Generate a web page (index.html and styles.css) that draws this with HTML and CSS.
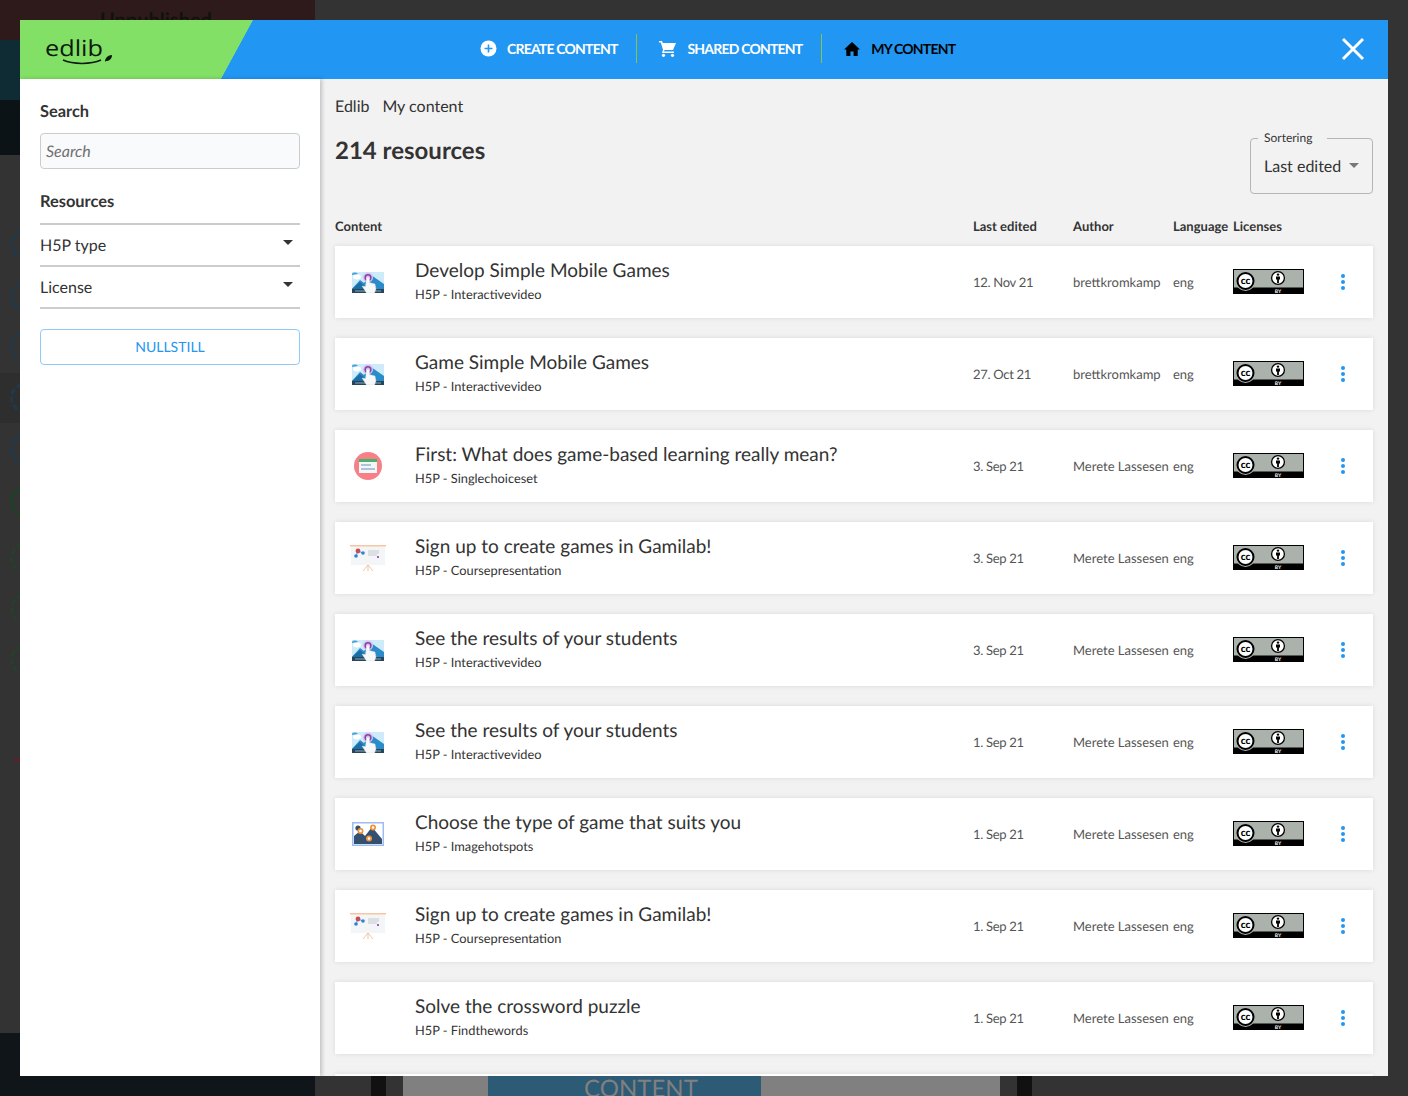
FILE: index.html
```html
<!DOCTYPE html>
<html lang="en">
<head>
    <meta charset="UTF-8">
    <meta name="viewport" content="width=device-width, initial-scale=1.0">
    <title>Edlib - My content</title>
    <link rel="stylesheet" href="styles.css">
</head>
<body>

    <svg width="0" height="0" class="defs">
        <defs>
            <symbol id="thumb-video" viewBox="0 0 32 21">
                <rect width="32" height="21" fill="#cdebf8"/>
                <path d="M0 17 L8 8 L12 11 L19 3 L32 12 V17Z" fill="#2a8ccb"/>
                <path d="M0 17 L8 10 L16 17Z" fill="#1b6fa8"/>
                <ellipse cx="5" cy="5" rx="4" ry="2.400" fill="#fff"/>
                <path d="M0 3 a3 2 0 0 1 6 -1" fill="#4aa3dc"/>
                <rect y="17" width="32" height="4" fill="#27465c"/>
                <rect x="3" y="18.500" width="26" height="1" fill="#8fa6b5"/>
                <circle cx="16" cy="5.500" r="5" fill="#d5c3ea"/>
                <circle cx="16" cy="5.500" r="2.800" fill="none" stroke="#8a3fb0" stroke-width="1.600"/>
                <path d="M14.500 5.500 h3 v5 l5.500 1.500 1 5 -1.500 4 h-8 l-4.500 -7 3.500 0.500Z" fill="#f6f8fa" stroke="#d3dade" stroke-width=".4"/>
            </symbol>
            <symbol id="thumb-choice" viewBox="0 0 28 28">
                <circle cx="14" cy="14" r="14" fill="#f77f88"/>
                <rect x="5" y="7" width="18" height="14" fill="#f4f6f8"/>
                <rect x="5" y="7" width="18" height="3" fill="#45b36b"/>
                <rect x="7" y="12" width="10" height="2" fill="#a9c4dc"/>
                <rect x="7" y="16" width="14" height="2" fill="#a9c4dc"/>
            </symbol>
            <symbol id="thumb-slides" viewBox="0 0 36 28">
                <rect x="1" y="2" width="34" height="19" fill="#f4f5f7"/>
                <rect y="1" width="36" height="1.500" fill="#f6c7a4"/>
                <circle cx="8" cy="7" r="2.400" fill="#e8413c"/>
                <circle cx="6" cy="12" r="1.800" fill="#2f80d8"/>
                <circle cx="13" cy="9" r="1.800" fill="#2f80d8"/>
                <path d="M8 7 L6 12 M8 7 L13 9" stroke="#2f80d8" stroke-width=".8"/>
                <path d="M18 7 H29 M18 9 H29 M18 11 H27" stroke="#c5c9d0" stroke-width="1"/>
                <rect x="27" y="12" width="2" height="2" fill="#a55bc8"/>
                <path d="M18 21 L13 27 M18 21 L23 27 M18 21 V27" stroke="#f3b48a" stroke-width=".8"/>
            </symbol>
            <symbol id="thumb-hotspot" viewBox="0 0 32 24">
                <rect x=".75" y=".75" width="30.500" height="22.500" fill="#fff" stroke="#9cbcf2" stroke-width="1.500"/>
                <path d="M2 22 V14 L8 9 L13 14 L20 5 L30 17 V22Z" fill="#34506e"/>
                <circle cx="6" cy="6" r="2.600" fill="#34506e"/>
                <circle cx="8.500" cy="9" r="3" fill="#f0923c"/>
                <circle cx="21" cy="5.500" r="3" fill="#f0923c"/>
                <circle cx="17" cy="16.500" r="3" fill="#f0923c"/>
                <circle cx="8.500" cy="9" r="1.300" fill="#fff"/>
                <circle cx="21" cy="5.500" r="1.300" fill="#fff"/>
                <circle cx="17" cy="16.500" r="1.300" fill="#fff"/>
            </symbol>
            <symbol id="cc-by" viewBox="0 0 71 25">
                <rect width="71" height="25" fill="#000"/>
                <rect x="1" y="1" width="69" height="17.500" fill="#aab2ab"/>
                <circle cx="12.500" cy="12" r="10" fill="#aab2ab"/>
                <circle cx="12.500" cy="12" r="8" fill="#fff" stroke="#000" stroke-width="2"/>
                <text x="12.500" y="15" class="cc-mark">cc</text>
                <circle cx="45" cy="9" r="6.400" fill="#fff" stroke="#000" stroke-width="1.300"/>
                <circle cx="45" cy="5.600" r="1.200" fill="#000"/>
                <path d="M43 7.400h4v3.200h-1.100v3.400h-1.800v-3.400H43Z" fill="#000"/>
                <text x="45" y="23.700" class="by-mark">BY</text>
            </symbol>
        </defs>
    </svg>

    <!-- Siden bak modalen -->
    <div class="backdrop">
        <div class="back-hero">
            <div class="back-label">Unpublished</div>
        </div>
        <div class="back-band"></div>
        <div class="back-rings">
            <span class="ring"></span>
            <span class="ring"></span>
            <span class="ring"></span>
            <span class="ring"></span>
            <span class="ring"></span>
            <span class="ring ring-solid"></span>
            <span class="ring ring-green"></span>
            <span class="ring ring-green"></span>
            <span class="ring ring-green"></span>
        </div>
        <div class="back-tick"></div>
        <div class="back-footer">
            <div class="back-footer-left"></div>
            <div class="back-gap"></div>
            <div class="back-strip"></div>
            <div class="back-gap small"></div>
            <div class="back-tabs">
                <div class="back-tab"></div>
                <div class="back-tab active">CONTENT</div>
                <div class="back-tab wide"></div>
            </div>
            <div class="back-gap small"></div>
            <div class="back-strip"></div>
        </div>
    </div>

    <div class="modal">
        <header class="topbar">
            <div class="brand">
                <div class="brand-name">edlib</div>
                <svg class="brand-leaf" width="8" height="9" viewBox="0 0 8 9"><path d="M1 8 C1 4 4 1 8 1 C8 5 5 7 2 7Z" fill="#0b1a0b"/></svg>
                <svg class="brand-smile" width="40" height="6" viewBox="0 0 40 6"><path d="M1 1 C11 5.500 29 5.500 39 1" fill="none" stroke="#0b1a0b" stroke-width="1.500"/></svg>
            </div>
            <nav class="nav">
                <a class="nav-item">
                    <svg width="17" height="17" viewBox="0 0 17 17"><circle cx="8.500" cy="8.500" r="8" fill="#fff"/><path d="M8.500 4.500v8M4.500 8.500h8" stroke="#2196f3" stroke-width="1.600"/></svg>
                    CREATE CONTENT
                </a>
                <a class="nav-item">
                    <svg width="18" height="17" viewBox="0 0 18 17"><path d="M0 1h3l.8 2H17l-3 7H5.500L5 11.500h10v1.600H3L4 9.800 1.800 2.600H0Z" fill="#fff"/><circle cx="4.500" cy="15.300" r="1.600" fill="#fff"/><circle cx="13.500" cy="15.300" r="1.600" fill="#fff"/></svg>
                    SHARED CONTENT
                </a>
                <a class="nav-item current">
                    <svg width="16" height="14" viewBox="0 0 16 14"><path d="M8 0 16 7.400h-2.300V14H9.600V9.400H6.400V14H2.300V7.400H0Z" fill="#000"/></svg>
                    MY CONTENT
                </a>
            </nav>
            <svg class="close" width="24" height="24" viewBox="0 0 24 24"><path d="M2 2 22 22M22 2 2 22" stroke="#fff" stroke-width="3"/></svg>
        </header>

        <div class="body">
            <aside class="sidebar">
                <h3>Search</h3>
                <input type="text" class="search-input" placeholder="Search">
                <h3 class="resources-title">Resources</h3>
                <div class="filter">H5P type<span class="caret"></span></div>
                <div class="filter">License<span class="caret"></span></div>
                <button class="reset-button">NULLSTILL</button>
            </aside>

            <main class="content">
                <div class="crumbs"><span>Edlib</span><span>My content</span></div>
                <div class="title-row">
                    <h1>214 resources</h1>
                    <fieldset class="sort">
                        <legend>Sortering</legend>
                        <span>Last edited</span><span class="caret gray"></span>
                    </fieldset>
                </div>

                <div class="table-head">
                    <div>Content</div>
                    <div>Last edited</div>
                    <div>Author</div>
                    <div>Language</div>
                    <div>Licenses</div>
                </div>

                <div class="rows" id="rows"></div>
            </main>
        </div>
    </div>

    <script>
        var resources = [
            ["video", "Develop Simple Mobile Games", "Interactivevideo", "12. Nov 21", "brettkromkamp"],
            ["video", "Game Simple Mobile Games", "Interactivevideo", "27. Oct 21", "brettkromkamp"],
            ["choice", "First: What does game-based learning really mean?", "Singlechoiceset", "3. Sep 21", "Merete Lassesen"],
            ["slides", "Sign up to create games in Gamilab!", "Coursepresentation", "3. Sep 21", "Merete Lassesen"],
            ["video", "See the results of your students", "Interactivevideo", "3. Sep 21", "Merete Lassesen"],
            ["video", "See the results of your students", "Interactivevideo", "1. Sep 21", "Merete Lassesen"],
            ["hotspot", "Choose the type of game that suits you", "Imagehotspots", "1. Sep 21", "Merete Lassesen"],
            ["slides", "Sign up to create games in Gamilab!", "Coursepresentation", "1. Sep 21", "Merete Lassesen"],
            ["", "Solve the crossword puzzle", "Findthewords", "1. Sep 21", "Merete Lassesen"]
        ];

        var html = "";
        resources.forEach(function (r) {
            var thumb = r[0] ? '<svg class="thumb-' + r[0] + '"><use href="#thumb-' + r[0] + '"/></svg>' : "";
            html += '<div class="row">' +
                '<div class="thumb">' + thumb + '</div>' +
                '<div class="row-main"><div class="row-title">' + r[1] + '</div><div class="row-type">H5P - ' + r[2] + '</div></div>' +
                '<div class="cell date">' + r[3] + '</div>' +
                '<div class="cell">' + r[4] + '</div>' +
                '<div class="cell">eng</div>' +
                '<div class="license"><svg width="71" height="25"><use href="#cc-by"/></svg></div>' +
                '<div class="dots"><i></i><i></i><i></i></div>' +
                '</div>';
        });
        html += '<div class="row"></div>';
        document.getElementById("rows").innerHTML = html;
    </script>

</body>
</html>
```

FILE: styles.css
```css
* {
    box-sizing: border-box;
}

html, body {
    height: 100%;
}

body {
    margin: 0;
    font-family: Lato, "Liberation Sans", sans-serif;
    background-color: #333;
    color: #333;
    overflow: hidden;
    text-rendering: geometricPrecision;
}

.defs {
    position: absolute;
}

.cc-mark {
    font-family: Lato, sans-serif;
    font-size: 10px;
    font-weight: 900;
    text-anchor: middle;
}

.by-mark {
    font-family: Lato, sans-serif;
    font-size: 5px;
    font-weight: 700;
    fill: #fff;
    text-anchor: middle;
}

/* Backdrop */
.backdrop {
    position: absolute;
    inset: 0;
    overflow: hidden;
}

.back-hero {
    width: 315px;
    height: 155px;
    background: linear-gradient(to bottom, #2e1a1a 0, #2e1a1a 40px, #0f2b33 40px, #0f2b33 100px, #0b1316 100px);
}

.back-label {
    padding: 8px 0 0 100px;
    font-size: 20px;
    font-weight: 700;
    color: #111;
    height: 20px;
    overflow: hidden;
}

.back-band {
    position: absolute;
    left: 0;
    top: 373px;
    width: 20px;
    height: 50px;
    background-color: #2e2e2e;
}

.back-rings {
    position: absolute;
    left: 10px;
    top: 230px;
    display: flex;
    flex-direction: column;
    gap: 21px;
}

.ring {
    display: block;
    width: 30px;
    height: 30px;
    border: 3px dashed #1f3a4d;
    border-radius: 50%;
}

.ring-solid {
    margin-top: 2px;
    border: 3px solid #1f4026;
    margin-bottom: 5px;
}

.ring-green {
    border-color: #25402b;
}

.back-tick {
    position: absolute;
    left: 14px;
    top: 759px;
    width: 8px;
    height: 3px;
    background-color: #5c1f28;
}

.back-footer {
    position: absolute;
    left: 0;
    right: 0;
    bottom: 0;
    height: 63px;
    display: flex;
    align-items: flex-end;
}

.back-footer-left {
    width: 315px;
    height: 63px;
    background-color: #0f1519;
}

.back-gap {
    width: 56px;
}

.back-gap.small {
    width: 17px;
}

.back-strip {
    width: 15px;
    height: 20px;
    background-color: #111;
}

.back-tabs {
    display: flex;
    height: 20px;
}

.back-tab {
    width: 85px;
    background-color: #808080;
}

.back-tab.active {
    width: 273px;
    padding-left: 33px;
    background-color: #2d5a75;
    color: #808080;
    font-size: 24px;
    line-height: 25px;
    text-align: center;
}

.back-tab.wide {
    width: 239px;
}

/* Modal */
.modal {
    position: absolute;
    left: 20px;
    top: 20px;
    width: 1368px;
    height: 1056px;
    display: flex;
    flex-direction: column;
    background-color: #f2f2f2;
    overflow: hidden;
}

.topbar {
    position: relative;
    height: 59px;
    flex: none;
    display: flex;
    align-items: center;
    padding-bottom: 2px;
    background: linear-gradient(118.500deg, #82e066 0, #82e066 204.500px, #2196f3 205px);
}

.brand {
    position: absolute;
    left: 26px;
    top: 0;
    width: 70px;
    height: 59px;
}

.brand-name {
    position: absolute;
    left: -1px;
    top: 13px;
    font-family: "Open Sans", sans-serif;
    font-size: 22px;
    line-height: 30px;
    color: #0b1a0b;
    transform: scaleX(1.15);
    transform-origin: left center;
}

.brand-leaf {
    position: absolute;
    left: 58px;
    top: 34px;
}

.brand-smile {
    position: absolute;
    left: 16px;
    top: 39px;
}

.nav {
    margin-left: 438px;
    display: flex;
    align-items: center;
}

.nav-item {
    display: flex;
    align-items: center;
    gap: 10px;
    height: 29px;
    padding: 0 19px 0 22px;
    font-size: 14px;
    font-weight: 700;
    letter-spacing: -.8px;
    color: #fff;
    border-right: 1px solid #8bc34a;
}

.nav-item.current {
    color: #000;
    border-right: none;
    gap: 11px;
}

.close {
    position: absolute;
    right: 23px;
    top: 17px;
}

.body {
    flex: 1;
    display: flex;
    min-height: 0;
}

.sidebar {
    width: 300px;
    flex: none;
    padding: 22px 20px 0;
    background-color: #fff;
    box-shadow: 2px 0 4px rgba(0, 0, 0, 0.2);
    position: relative;
}

.sidebar h3 {
    margin: 0 0 11px;
    font-size: 16.400px;
    line-height: 21px;
    font-weight: 700;
    color: #333;
}

.search-input {
    display: block;
    width: 100%;
    height: 36px;
    padding: 0 5px;
    font-family: inherit;
    font-size: 16px;
    font-style: italic;
    text-rendering: geometricPrecision;
    background-color: #f9fafc;
    border: 1px solid #ccc;
    border-radius: 4px;
}

.search-input::placeholder {
    color: #707070;
    opacity: 1;
}

.sidebar .resources-title {
    margin: 22px 0 11px;
}

.filter {
    position: relative;
    height: 42px;
    line-height: 42px;
    font-size: 16px;
    border-top: 2px solid #ccc;
}

.filter:last-of-type {
    height: 44px;
    border-bottom: 2px solid #ccc;
}

.caret {
    position: absolute;
    right: 7px;
    top: 15px;
    width: 0;
    height: 0;
    border-left: 5px solid transparent;
    border-right: 5px solid transparent;
    border-top: 5px solid #333;
}

.reset-button {
    display: block;
    width: 100%;
    height: 36px;
    margin-top: 20px;
    padding: 0 0 2px;
    font-family: inherit;
    font-size: 14px;
    text-rendering: geometricPrecision;
    color: #2196f3;
    background-color: #fff;
    border: 1px solid #90caf9;
    border-radius: 4px;
}

.content {
    flex: 1;
    min-width: 0;
    padding: 0 15px;
}

.crumbs {
    display: flex;
    gap: 13px;
    padding-top: 18px;
    font-size: 16px;
    line-height: 20px;
}

.title-row {
    display: flex;
    justify-content: space-between;
    align-items: flex-start;
    height: 99px;
}

h1 {
    margin: 19px 0 0;
    font-size: 24px;
    line-height: 30px;
    font-weight: 700;
    color: #333;
}

.sort {
    position: relative;
    width: 123px;
    height: 63px;
    margin: 14px 0 0;
    padding: 0 0 0 13px;
    font-size: 16px;
    border: 1px solid #b5b5b5;
    border-radius: 4px;
    line-height: 44px;
}

.sort legend {
    margin-left: -6px;
    padding: 0 15px 0 6px;
    font-size: 12px;
    line-height: 14px;
}

.caret.gray {
    right: 13px;
    top: 18px;
    border-top-color: #777;
}

.table-head,
.row {
    display: grid;
    grid-template-columns: 638px 100px 100px 60px 1fr;
}

.table-head {
    height: 30px;
    font-size: 13px;
    line-height: 20px;
    font-weight: 700;
}

.rows {
    display: flex;
    flex-direction: column;
    gap: 20px;
}

.row {
    grid-template-columns: 80px 558px 100px 100px 60px 108px 1fr;
    align-items: center;
    height: 72px;
    flex: none;
    background-color: #fff;
    box-shadow: 0 0 5px rgba(0, 0, 0, 0.1);
}

.thumb {
    padding-left: 17px;
    display: flex;
    align-items: center;
}

.thumb svg {
    display: block;
}

.thumb-video {
    width: 32px;
    height: 21px;
}

.thumb-choice {
    width: 28px;
    height: 28px;
    margin-left: 2px;
}

.thumb-slides {
    width: 36px;
    height: 28px;
    margin-left: -2px;
}

.thumb-hotspot {
    width: 32px;
    height: 24px;
}

.row-main {
    padding-bottom: 4px;
}

.row-title {
    font-size: 19px;
    line-height: 24px;
    color: #333;
}

.row-type {
    margin-top: 3px;
    font-size: 12.800px;
    line-height: 16px;
    color: #333;
}

.cell {
    font-size: 13px;
    color: #555;
}

.cell.date {
    letter-spacing: -.3px;
}

.license {
    display: flex;
    padding-bottom: 1px;
}

.license svg {
    display: block;
}

.dots {
    display: flex;
    flex-direction: column;
    gap: 2px;
    width: 4px;
}

.dots i {
    display: block;
    width: 4px;
    height: 4px;
    border-radius: 50%;
    background-color: #2196f3;
}
```
